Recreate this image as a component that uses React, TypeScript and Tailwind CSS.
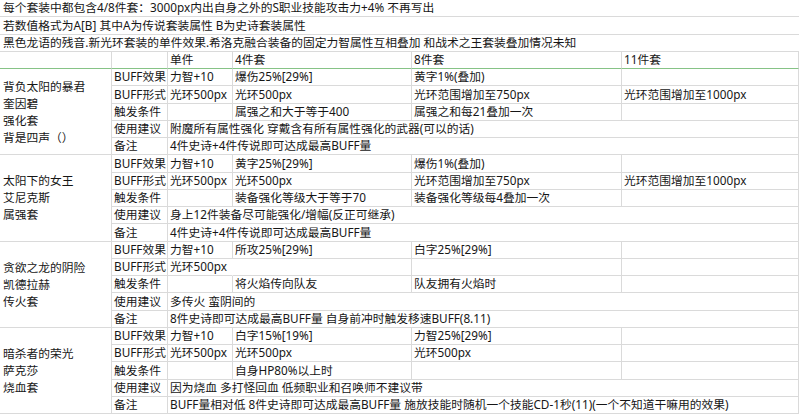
import React from 'react';

interface SetGroup {
  names: string[];
  effect: string[];
  form: string[];
  trigger: string[];
  advice: string;
  note: string;
  noLineAfterForm?: boolean;
}

const groups: SetGroup[] = [
  {
    names: ['背负太阳的暴君', '奎因碧', '强化套', '背是四声（）'],
    effect: ['力智+10', '爆伤25%[29%]', '黄字1%(叠加)', ''],
    form: ['光环500px', '光环500px', '光环范围增加至750px', '光环范围增加至1000px'],
    trigger: ['', '属强之和大于等于400', '属强之和每21叠加一次', ''],
    advice: '附魔所有属性强化 穿戴含有所有属性强化的武器(可以的话)',
    note: '4件史诗+4件传说即可达成最高BUFF量',
  },
  {
    names: ['太阳下的女王', '艾尼克斯', '属强套'],
    effect: ['力智+10', '黄字25%[29%]', '爆伤1%(叠加)', ''],
    form: ['光环500px', '光环500px', '光环范围增加至750px', '光环范围增加至1000px'],
    trigger: ['', '装备强化等级大于等于70', '装备强化等级每4叠加一次', ''],
    advice: '身上12件装备尽可能强化/增幅(反正可继承)',
    note: '4件史诗+4件传说即可达成最高BUFF量',
  },
  {
    names: ['贪欲之龙的阴险', '凯德拉赫', '传火套'],
    effect: ['力智+10', '所攻25%[29%]', '白字25%[29%]', ''],
    form: ['光环500px', '', '', ''],
    trigger: ['', '将火焰传向队友', '队友拥有火焰时', ''],
    advice: '多传火 蛮阴间的',
    note: '8件史诗即可达成最高BUFF量 自身前冲时触发移速BUFF(8.11)',
    noLineAfterForm: true,
  },
  {
    names: ['暗杀者的荣光', '萨克莎', '烧血套'],
    effect: ['力智+10', '白字15%[19%]', '力智25%[29%]', ''],
    form: ['光环500px', '光环500px', '光环500px', ''],
    trigger: ['', '自身HP80%以上时', '', ''],
    advice: '因为烧血 多打怪回血 低频职业和召唤师不建议带',
    note: 'BUFF量相对低 8件史诗即可达成最高BUFF量 施放技能时随机一个技能CD-1秒(11)(一个不知道干嘛用的效果)',
  },
];

const cell = 'border-r border-b border-[#dadada] pl-[2px] whitespace-nowrap overflow-hidden flex items-center';

const Row = ({ label, values, noLine }: { label: string; values: string[]; noLine?: boolean }) => (
  <>
    <div className={cell}>{label}</div>
    {values.map((v, i) => (
      <div key={i} className={`${cell} ${noLine && i === 0 ? 'border-r-transparent overflow-visible' : ''}`}>
        {v}
      </div>
    ))}
  </>
);

export default function App() {
  return (
    <div className="w-[799px] h-[415px] bg-white overflow-hidden text-[11.75px] text-[#161616] font-['Noto_Sans','Noto_Sans_CJK_SC',sans-serif]">
      <div className="grid grid-cols-[112px_56px_65px_179px_210px_177px] auto-rows-[17.25px]">
        <div className="col-span-6 border-b border-[#dadada] pl-[3px] flex items-center whitespace-nowrap">
          每个套装中都包含4/8件套：3000px内出自身之外的S职业技能攻击力+4% 不再写出
        </div>
        <div className="col-span-6 border-b border-[#dadada] pl-[3px] flex items-center whitespace-nowrap">
          若数值格式为A[B] 其中A为传说套装属性 B为史诗套装属性
        </div>
        <div className="col-span-6 border-b border-[#dadada] pl-[3px] flex items-center whitespace-nowrap">
          黑色龙语的残音.新光环套装的单件效果.希洛克融合装备的固定力智属性互相叠加 和战术之王套装叠加情况未知
        </div>

        {/* header */}
        <div className={`${cell} border-b-[#86c386]`}></div>
        <div className={`${cell} border-b-[#86c386]`}></div>
        <div className={`${cell} border-b-[#86c386]`}>单件</div>
        <div className={`${cell} border-b-[#86c386]`}>4件套</div>
        <div className={`${cell} border-b-[#86c386]`}>8件套</div>
        <div className={`${cell} border-b-[#86c386]`}>11件套</div>

        {groups.map((g, gi) => (
          <React.Fragment key={gi}>
            <div className="row-span-5 border-r border-b border-[#dadada] pl-[3px] flex flex-col justify-center leading-[17px] whitespace-nowrap">
              {g.names.map((n) => (
                <span key={n}>{n}</span>
              ))}
            </div>
            <Row label="BUFF效果" values={g.effect} />
            <Row label="BUFF形式" values={g.form} noLine={g.noLineAfterForm} />
            <Row label="触发条件" values={g.trigger} />
            <div className={cell}>使用建议</div>
            <div className={`${cell} col-span-4`}>{g.advice}</div>
            <div className={cell}>备注</div>
            <div className={`${cell} col-span-4`}>{g.note}</div>
          </React.Fragment>
        ))}
      </div>
    </div>
  );
}
